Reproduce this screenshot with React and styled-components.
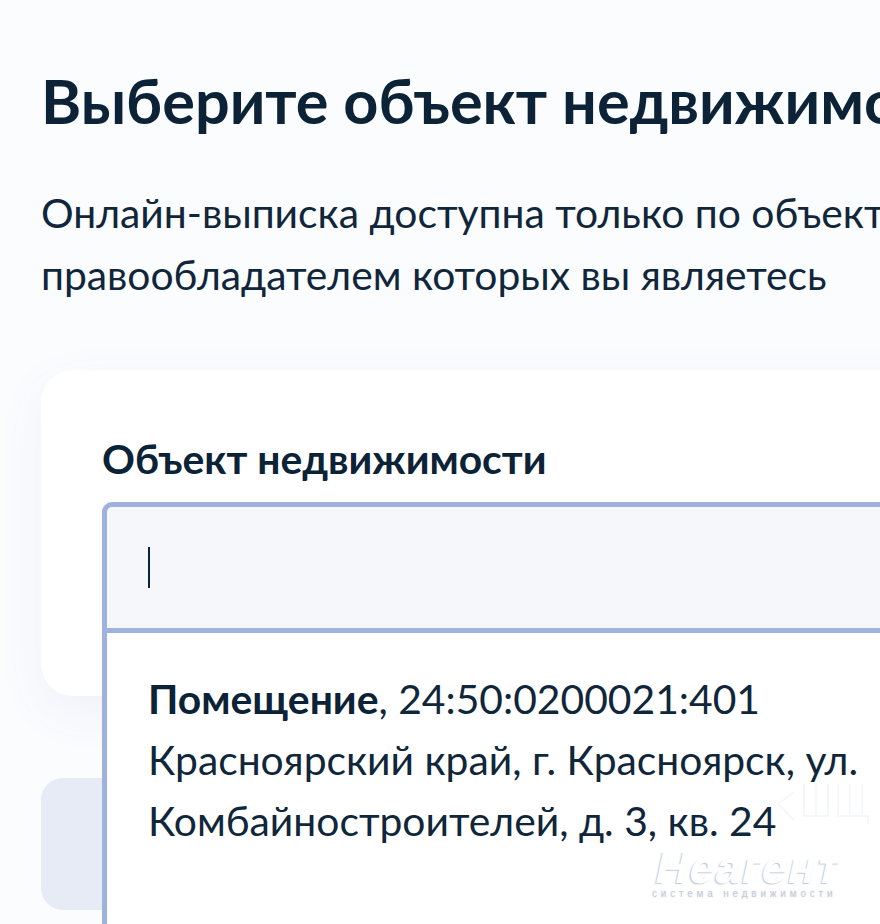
import React from "react";
import styled, { createGlobalStyle } from "styled-components";

const Global = createGlobalStyle`
  html, body { margin: 0; padding: 0; background: #fbfcfe; overflow: hidden; }
  body { width: 880px; height: 924px; font-family: Lato, "Noto Sans", sans-serif; color: #0c2236; }
`;
const Page = styled.main`
  width: 1300px;
  height: 924px;
  box-sizing: border-box;
  padding: 67px 0 0 41px;
  overflow: hidden;
  position: relative;
`;
const Title = styled.h1`
  margin: 0;
  font-size: 61.2px;
  line-height: 68px;
  font-weight: 700;
  white-space: nowrap;
  color: #0c2236;
`;
const Lead = styled.p`
  margin: 47px 0 0;
  font-size: 40.8px;
  line-height: 62px;
  font-weight: 400;
  white-space: nowrap;
  color: #10263a;
`;
const Card = styled.section`
  margin-top: 64px;
  width: 1200px;
  height: 326px;
  box-sizing: border-box;
  padding: 62px 61px 0;
  background: #fff;
  border-radius: 32px;
  box-shadow: 0 16px 48px rgba(70, 100, 170, 0.07);
`;
const Label = styled.div`
  font-size: 40.8px;
  line-height: 56px;
  font-weight: 700;
  margin-top: -1px;
  white-space: nowrap;
  color: #0c2236;
`;
const Combo = styled.div`
  position: relative;
  margin-top: 15px;
  z-index: 1;
`;
const Field = styled.div`
  height: 131px;
  box-sizing: border-box;
  display: flex;
  align-items: center;
  padding-left: 41px;
  background: #f5f7fb;
  border: 5px solid #9fb1dd;
  border-radius: 10px 10px 0 0;
`;
const Caret = styled.span`
  display: block;
  width: 2px;
  height: 41px;
  background: #0c2236;
`;
const Menu = styled.div`
  position: absolute;
  top: 131px;
  left: 0;
  right: 0;
  height: 400px;
  box-sizing: border-box;
  padding: 35px 41px;
  background: #fff;
  border: 5px solid #9fb1dd;
  border-top: 0;
  font-size: 40.8px;
  line-height: 61px;
  color: #10263a;
`;
const Strong = styled.b`
  font-weight: 700;
  color: #0c2236;
`;
const Button = styled.div`
  margin-top: 82px;
  width: 640px;
  height: 132px;
  border-radius: 22px;
  background: #e6ebf5;
`;
const Watermark = styled.div`
  position: absolute;
  left: 652px;
  top: 847px;
  width: 200px;
  z-index: 2;
`;
const WatermarkName = styled.div`
  font-family: "Liberation Sans", sans-serif;
  font-size: 45px;
  line-height: 42px;
  font-weight: 700;
  letter-spacing: 1.2px;
  white-space: nowrap;
  color: #fff;
  transform: skewX(-12deg);
  transform-origin: 0 100%;
  text-shadow: -1px 1px 1px rgba(140, 150, 165, 0.5);
`;
const WatermarkSub = styled.div`
  font-family: "Liberation Sans", sans-serif;
  font-size: 10px;
  line-height: 10px;
  letter-spacing: 3.8px;
  white-space: nowrap;
  color: rgba(185, 192, 205, 0.75);
  text-shadow: 0 0 2px rgba(200, 205, 215, 0.7);
`;
const WatermarkMark = styled.svg`
  position: absolute;
  left: 778px;
  top: 782px;
  z-index: 2;
`;

export default function App() {
  return (
    <>
      <Global />
      <Page>
        <Title>Выберите объект недвижимости</Title>
        <Lead>
          Онлайн-выписка доступна только по объектам,
          <br />
          правообладателем которых вы являетесь
        </Lead>
        <Card>
          <Label>Объект недвижимости</Label>
          <Combo>
            <Field>
              <Caret />
            </Field>
            <Menu>
              <Strong>Помещение</Strong>, 24:50:0200021:401
              <br />
              Красноярский край, г. Красноярск, ул.
              <br />
              Комбайностроителей, д. 3, кв. 24
            </Menu>
          </Combo>
        </Card>
        <Button />
        <WatermarkMark width="102" height="46" viewBox="0 0 102 46" fill="none" stroke="#f6f7fa" strokeWidth="2">
          <path d="M0 22 L16 10 M0 22 L16 38" />
          <path d="M26 2 V34 H50 V2 M38 2 V34" />
          <path d="M60 2 V34 H84 V2 M72 2 V34 M84 34 H90 V42" />
        </WatermarkMark>
        <Watermark>
          <WatermarkName>Неагент</WatermarkName>
          <WatermarkSub>система недвижимости</WatermarkSub>
        </Watermark>
      </Page>
    </>
  );
}
